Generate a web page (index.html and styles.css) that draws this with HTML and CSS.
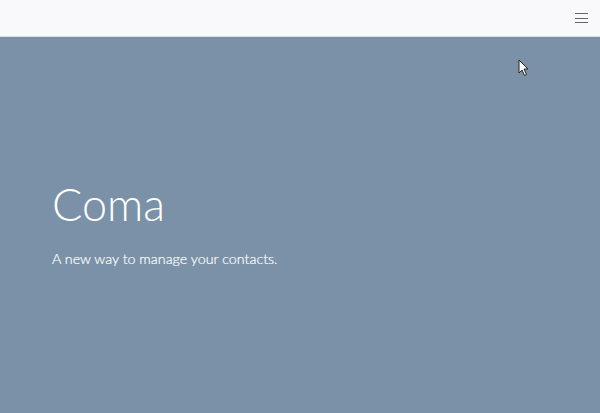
FILE: index.html
```html
<!DOCTYPE html>
<html>
<head>
<meta charset="utf-8">
<link rel="stylesheet" href="styles.css">
</head>
<body>
<header class="topbar">
  <button class="menu" aria-label="Menu">
    <span></span><span></span><span></span>
  </button>
</header>
<main class="hero">
  <h1 class="title">Coma</h1>
  <p class="subtitle">A new way to manage your contacts.</p>
  <svg class="cursor" width="12" height="18" viewBox="0 0 12 18"><path d="M1 1 L1 14 L4 11 L6.5 16.5 L8.5 15.5 L6 10 L10 10 Z" fill="#fff" stroke="#222" stroke-width="1" stroke-linejoin="round"/></svg>
</main>
</body>
</html>
```
FILE: styles.css
```css
html, body { margin: 0; padding: 0; height: 100%; }
body { font-family: Lato, "Open Sans", sans-serif; background: #7a91a7; overflow: hidden; }
.topbar {
  height: 37px;
  background: #f9f8fb;
  border-bottom: 1px solid #dcdfe6;
  display: flex;
  justify-content: flex-end;
  align-items: center;
  padding-right: 12px;
  box-sizing: border-box;
}
.menu {
  background: none; border: 0; padding: 0;
  width: 13px; height: 10px;
  display: flex; flex-direction: column; justify-content: space-between;
}
.menu span { display: block; height: 1px; background: #666; }
.hero {
  position: relative;
  height: 376px;
  background: #7a91a7;
  color: #fff;
  padding: 140px 0 0 52px;
  box-sizing: border-box;
}
.title {
  margin: 0;
  font-weight: 300;
  font-size: 45px;
  line-height: 54px;
}
.subtitle {
  margin: 18px 0 0;
  font-weight: 300;
  font-size: 14.3px;
  line-height: 20px;
  -webkit-text-stroke: 0.2px #fff;
}
.cursor { position: absolute; left: 518px; top: 22px; }
```
